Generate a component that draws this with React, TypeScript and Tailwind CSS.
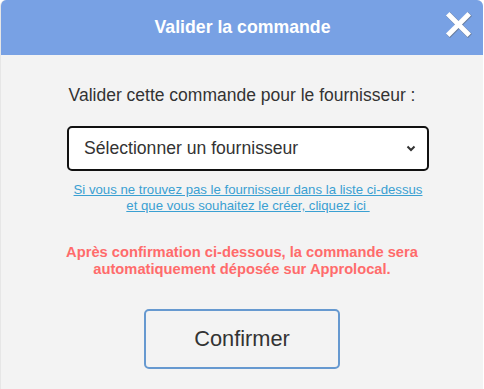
import React from "react";

export default function App() {
  return (
    <div className="w-[484px] h-[389px] bg-white overflow-hidden" style={{ fontFamily: '"Liberation Sans", Arial, sans-serif' }}>
      <div className="w-[483px] h-[389px] rounded-t-[6px] overflow-hidden bg-[#f3f3f3] flex flex-col border-l border-[#e6e6e6]">
        <div className="relative h-[55px] bg-[#78a1e4] flex items-center justify-center shrink-0">
          <span className="text-white font-bold text-[17.7px] ml-[1px]">Valider la commande</span>
          <svg className="absolute right-[10px] top-[11px]" width="28" height="28" viewBox="0 0 28 28">
            <g stroke="#555" strokeWidth="5.5" strokeLinecap="square" opacity="0.5">
              <line x1="5" y1="5" x2="23" y2="23" />
              <line x1="23" y1="5" x2="5" y2="23" />
            </g>
            <g stroke="#fff" strokeWidth="5" strokeLinecap="square">
              <line x1="4.5" y1="4.5" x2="22.5" y2="22.5" />
              <line x1="22.5" y1="4.5" x2="4.5" y2="22.5" />
            </g>
          </svg>
        </div>
        <div className="flex flex-col items-center">
          <p className="mt-[30px] text-[17.5px] leading-[20px] text-[#333]">Valider cette commande pour le fournisseur :</p>
          <div className="mt-[21px] ml-[12px] w-[362px] h-[45px] border-2 border-[#111] rounded-[5px] bg-white flex items-center justify-between pl-[15px] pr-[11px]">
            <span className="text-[17.6px] text-[#333]">Sélectionner un fournisseur</span>
            <svg width="10" height="7" viewBox="0 0 10 7">
              <path d="M1.5 1.5 L5 5 L8.5 1.5" stroke="#333" strokeWidth="2" fill="none" />
            </svg>
          </div>
          <p className="mt-[11px] ml-[12px] text-[13.2px] leading-[16px] text-[#3aa0d2] underline text-center">
            Si vous ne trouvez pas le fournisseur dans la liste ci-dessus<br />et que vous souhaitez le créer, cliquez ici&nbsp;
          </p>
          <p className="mt-[30px] text-[14.7px] leading-[17px] font-bold text-[#ff6b6b] text-center">
            Après confirmation ci-dessous, la commande sera<br />automatiquement déposée sur Approlocal.
          </p>
          <button className="mt-[31px] w-[196px] h-[60px] border-2 border-[#6699d0] rounded-[5px] text-[21.8px] text-[#333] bg-[#f3f3f3]">
            Confirmer
          </button>
        </div>
      </div>
    </div>
  );
}
